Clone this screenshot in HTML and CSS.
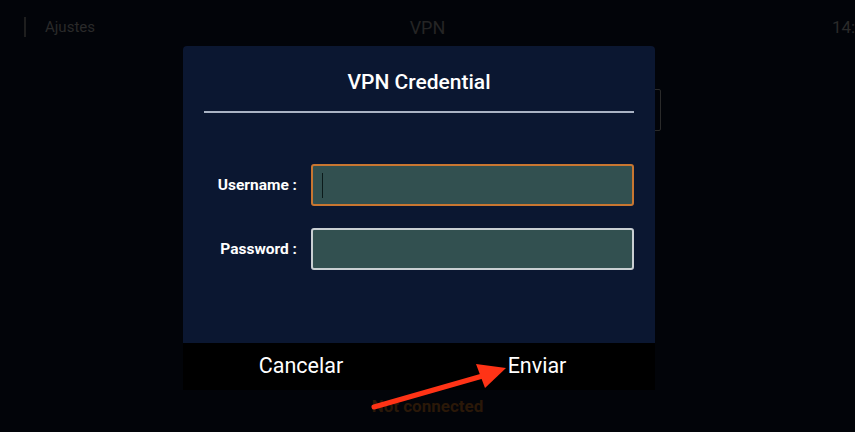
FILE: index.html
```html
<!DOCTYPE html>
<html>
<head>
    <title>VPN</title>
    <link rel="stylesheet" href="styles.css">
</head>
<body>
    <div class="screen">
        <div class="topbar">
            <div class="back"><span class="bar"></span>Ajustes</div>
            <div class="page-title">VPN</div>
            <div class="clock">14:</div>
        </div>
        <div class="content">
            <div class="ghost-field"></div>
            <div class="status">Not connected</div>
        </div>

        <div class="dialog">
            <div class="dialog-body">
                <h2>VPN Credential</h2>
                <hr>
                <div class="form">
                    <label>Username :</label>
                    <div class="field focused"><span class="caret"></span></div>
                    <label>Password :</label>
                    <div class="field"></div>
                </div>
            </div>
            <div class="dialog-buttons">
                <button>Cancelar</button>
                <button>Enviar</button>
            </div>
        </div>

        <svg class="arrow" width="855" height="432" viewBox="0 0 855 432">
            <line x1="374" y1="407" x2="486" y2="375" stroke="#ff3316" stroke-width="5" stroke-linecap="round"/>
            <polygon points="506,368 476,364 485,388" fill="#ff3316"/>
        </svg>
    </div>
</body>
</html>
```

FILE: styles.css
```css
body {
    margin: 0;
    background: #020409;
    font-family: Roboto, "Liberation Sans", sans-serif;
    overflow: hidden;
}

.screen {
    position: relative;
    width: 855px;
    height: 432px;
    overflow: hidden;
}

.topbar {
    display: grid;
    grid-template-columns: 1fr auto 1fr;
    align-items: center;
    height: 54px;
    padding-left: 24px;
    color: #2a2a2a;
}

.back {
    display: flex;
    align-items: center;
    font-size: 15px;
}

.back .bar {
    display: inline-block;
    width: 2px;
    height: 20px;
    background: #1e1e1e;
    margin-right: 19px;
}

.page-title {
    font-size: 18px;
    color: #252525;
    margin-left: -24px;
}

.clock {
    font-size: 17px;
    justify-self: end;
    width: 23px;
    overflow: hidden;
    white-space: nowrap;
}

.content {
    position: relative;
    height: 378px;
    padding-top: 35px;
    box-sizing: border-box;
}

.ghost-field {
    margin-left: 560px;
    width: 99px;
    height: 40px;
    border: 1px solid #2a2a2a;
    border-radius: 2px;
}

.status {
    position: absolute;
    left: 0;
    right: 0;
    bottom: 16px;
    text-align: center;
    font-size: 17px;
    font-weight: bold;
    color: #2a1808;
}

.dialog {
    position: absolute;
    left: 183px;
    top: 46px;
    width: 472px;
}

.dialog-body {
    background: #0b1731;
    border-radius: 4px 4px 0 0;
    height: 297px;
    padding-top: 24px;
    box-sizing: border-box;
}

.dialog h2 {
    margin: 0;
    text-align: center;
    color: #fff;
    font-size: 21px;
    font-weight: 500;
    line-height: 24px;
}

.dialog hr {
    margin: 17px 21px 0;
    border: none;
    height: 2px;
    background: #aab3c4;
}

.form {
    display: grid;
    grid-template-columns: 93px 1fr;
    column-gap: 14px;
    row-gap: 22px;
    align-items: center;
    padding: 51px 21px 0;
}

.form label {
    text-align: right;
    color: #fff;
    font-size: 15.5px;
    font-weight: bold;
}

.field {
    height: 42px;
    box-sizing: border-box;
    background: #325050;
    border: 2px solid #c9cfd2;
    border-radius: 3px;
    position: relative;
}

.field.focused {
    border-color: #c87631;
}

.caret {
    position: absolute;
    left: 9px;
    top: 7px;
    width: 1px;
    height: 25px;
    background: #0b1a1a;
}

.dialog-buttons {
    display: flex;
    background: #000;
    height: 47px;
}

.dialog-buttons button {
    flex: 1;
    background: none;
    border: none;
    color: #fff;
    font-family: Roboto, "Liberation Sans", sans-serif;
    font-size: 21.5px;
    padding: 0;
    margin-top: -2px;
}

.arrow {
    position: absolute;
    left: 0;
    top: 0;
}
```
